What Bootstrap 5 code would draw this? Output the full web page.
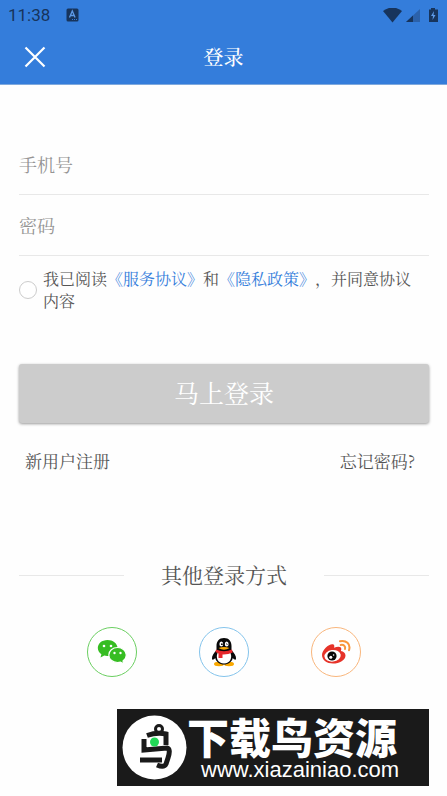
<!DOCTYPE html>
<html lang="zh-CN">
<head>
<meta charset="utf-8">
<meta name="viewport" content="width=device-width, initial-scale=1">
<title>登录</title>
<link href="https://cdn.jsdelivr.net/npm/bootstrap@5.3.0/dist/css/bootstrap.min.css" rel="stylesheet">
<style>
  body { background: #fefefe; color: #555; font-family: "Noto Serif CJK SC", "Noto Sans CJK SC", serif; text-spacing-trim: space-all; }
  .top-area { background: #347ddb; height: 85px; border-bottom: 1px solid #7fa9dd; }
  .status-line { height: 30px; padding: 0 8px; font: 17px/32px Roboto, sans-serif; color: #17345c; }
  .title-line { display: grid; grid-template-columns: 50px 1fr 50px; height: 54px; align-items: center; padding: 0 10px; }
  .title-line h1 { font-size: 20px; line-height: 28px; font-weight: 500; }
  .page-body { padding: 49px 18px 0 19px; }
  .line-input { height: 61px; padding: 0; font-size: 18px; border: 0; border-bottom: 1px solid #e8e8e8; border-radius: 0; background: transparent; }
  .line-input::placeholder { color: #949494; }
  .agree-row { gap: 6px; padding: 12px 14px 0 0; font-size: 16px; line-height: 22px; }
  .agree-row .form-check-input { width: 18px; height: 18px; border-color: #ccc; }
  .blue-link { color: #347ddb; }
  .login-btn { margin-top: 52px; height: 59px; padding: 0 0 4px; font-size: 25px; line-height: 36px; color: #fff; background: #ccc; border: 0; border-radius: 3px; box-shadow: 0 1px 3px rgba(0,0,0,.4); }
  .login-btn:hover { background: #c4c4c4; color: #fff; }
  .help-row { margin-top: 25px; padding: 0 14px 0 6px; font-size: 17px; line-height: 26px; }
  .help-row a { color: #555; }
  .other-title { margin-top: 83px; gap: 37px; }
  .other-title h2 { font-size: 21px; line-height: 34px; font-weight: 400; padding-bottom: 2px; }
  .rule-line { height: 1px; background: #e8e8e8; }
  .social-row { margin-top: 34px; gap: 62px; }
  .social-btn { width: 50px; height: 50px; background: #fff; border: 1px solid; border-radius: 50%; }
  .wechat { border-color: #6bcf61; } .qq { border-color: #84c4ec; } .weibo { border-color: #f9b67c; }
  .site-banner { width: 312px; height: 77px; margin-top: 32px; padding: 0 5px; background: #1a1a1a; color: #fff; }
  .site-name { font: 900 42px/44px "Noto Sans CJK SC", sans-serif; }
  .site-url { font: 22px/24px "Liberation Sans", Arial, sans-serif; padding-left: 14px; }
</style>
<script src="https://cdn.jsdelivr.net/npm/bootstrap@5.3.0/dist/js/bootstrap.bundle.min.js"></script>
</head>
<body>
<header class="top-area">
  <div class="status-line d-flex justify-content-between">
    <div class="d-flex align-items-center"><span>11:38</span>
      <svg class="ms-3" width="13" height="14" viewBox="0 0 13 14" aria-hidden="true"><rect x=".5" y=".5" width="12" height="13" rx="1.5" fill="#17345c"/><path d="M3.5 9.5 6.3 3l2.8 6.500M4.500 7.500h3.700" fill="none" stroke="#5d9ae8" stroke-width="1.300"/><path d="M6 11.500h5" stroke="#347ddb" stroke-dasharray="1 1"/></svg>
    </div>
    <svg width="57" height="18" viewBox="0 0 57 18" class="mt-2 align-self-start" aria-hidden="true"><g transform="translate(0 -1)">
      <path d="M1 4Q10.500-3 20 4L10.500 15.500Z" fill="#17345c"/><path d="M38 2V15H24Z" fill="#2b61aa"/><path d="M31 8.500V15H24Z" fill="#17345c"/>
      <path d="M49 1h4v1.500h3V15h-9V2.500h2Z" fill="#17345c"/><path d="m52 4-3 5h2l-.5 4 3-5h-2Z" fill="#5d9ae8"/></g></svg>
  </div>
  <div class="title-line text-white text-center">
    <button type="button" class="btn p-0 d-flex justify-content-center align-items-center border-0" aria-label="关闭"><svg width="22" height="22" viewBox="0 0 22 22"><path d="m1.500 1.500 19 19M20.500 1.500l-19 19" stroke="#fff" stroke-width="2.200"/></svg></button>
    <h1 class="m-0">登录</h1>
  </div>
</header>
<main class="page-body">
  <form>
    <input class="form-control line-input shadow-none" type="tel" aria-label="手机号" placeholder="手机号">
    <input class="form-control line-input shadow-none" type="password" aria-label="密码" placeholder="密码">
    <div class="agree-row d-flex align-items-center">
      <input class="form-check-input rounded-circle flex-shrink-0 m-0" type="checkbox" id="agree">
      <label for="agree">我已阅读<a class="blue-link text-decoration-none" href="#">《服务协议》</a>和<a class="blue-link text-decoration-none" href="#">《隐私政策》</a>，并同意协议内容</label>
    </div>
    <button type="button" class="btn login-btn w-100">马上登录</button>
  </form>
  <div class="help-row d-flex justify-content-between"><a class="text-decoration-none" href="#">新用户注册</a><a class="text-decoration-none" href="#">忘记密码?</a></div>
  <div class="other-title d-flex align-items-center"><div class="rule-line flex-grow-1"></div><h2 class="m-0">其他登录方式</h2><div class="rule-line flex-grow-1"></div></div>
  <div class="social-row d-flex justify-content-center">
    <button type="button" class="social-btn wechat p-0 d-flex justify-content-center align-items-center" aria-label="微信登录">
      <svg width="30" height="26" viewBox="0 0 30 26"><path d="M10.500 1C4.800 1 .8 4.600.8 9c0 2.600 1.400 4.800 3.600 6.300L3.500 18.500l3.800-2q1.600.5 3.400.4h10V9C20 4.200 16 1 10.500 1Z" fill="#36bd22"/><path d="M20.500 8.500c-5 0-8.700 3.300-8.700 7.500s3.700 7.500 8.700 7.500q1.500 0 3-.4l3.300 2-.8-3c2-1.400 3.300-3.500 3.300-6.100 0-4.200-3.800-7.500-8.800-7.500Z" fill="#36bd22" stroke="#fff" stroke-width="1.200"/><g fill="#fff"><circle cx="7" cy="7" r="1.300"/><circle cx="14" cy="7" r="1.300"/><circle cx="17.500" cy="14" r="1.200"/><circle cx="23.500" cy="14" r="1.200"/></g></svg>
    </button>
    <button type="button" class="social-btn qq p-0 d-flex justify-content-center align-items-center" aria-label="QQ登录">
      <svg width="26" height="30" viewBox="0 0 26 30"><ellipse cx="8" cy="27" rx="5" ry="2.200" fill="#f9a800"/><ellipse cx="18" cy="27" rx="5" ry="2.200" fill="#f9a800"/><path d="M13 1C8 1 5.500 4.500 5.500 9v4C3 16 .5 19 1 22c.3 1.500 2 .5 3.200-1 1 4 4.500 6.500 8.800 6.500s7.800-2.500 8.800-6.500c1.200 1.500 2.900 2.500 3.200 1 .5-3-2-6-4.500-9V9C20.500 4.500 18 1 13 1Z" fill="#080808"/><path d="M6.500 16h13c2 5-.5 10.500-6.500 10.500S4.500 21 6.500 16Z" fill="#fff"/><path d="M5 12.500q8 3.500 16 0l.7 3q-5 2.200-10.200 1.900V21H7.500v-4.500L4.500 15Z" fill="#e5262b"/><ellipse cx="10.300" cy="7" rx="1.900" ry="2.500" fill="#fff"/><ellipse cx="15.700" cy="7" rx="1.900" ry="2.500" fill="#fff"/><circle cx="10.900" cy="7.200" r=".9"/><path d="M15 7.500q.8-1.500 1.600 0" fill="none" stroke="#000" stroke-width=".8"/><path d="M7.500 11q5.500-2.200 11 0-5.500 3.300-11 0Z" fill="#f9a800"/></svg>
    </button>
    <button type="button" class="social-btn weibo p-0 d-flex justify-content-center align-items-center" aria-label="微博登录">
      <svg width="30" height="26" viewBox="0 0 30 26"><path d="M1 16C1 10.500 8.500 4.300 12 5.300c1.500.4 1.500 2 1 3.500 3.500-1.500 7.500-1.700 7.300 1.400l-.4 1.900c2.500.6 4.600 1.900 4.600 4.300 0 4.500-6 8.100-12.500 8.100C6 24.500 1 21 1 16Z" fill="#e63329"/><ellipse cx="11.600" cy="16.800" rx="8.200" ry="5.800" fill="#fff" transform="rotate(-7 11.600 16.800)"/><circle cx="11" cy="17" r="4.600" fill="#080808"/><circle cx="9.800" cy="18.200" r="1.500" fill="#fff"/><circle cx="12.600" cy="16" r=".8" fill="#fff"/><g fill="none" stroke="#f9963b" stroke-width="2" stroke-linecap="round"><path d="M19 2.200C25 .8 30 5 28 11.200"/><path d="M19.700 6c3-.7 5.200 1.300 4.300 4"/></g></svg>
    </button>
  </div>
  <div class="site-banner d-flex align-items-center ms-auto">
    <svg class="flex-shrink-0" width="65" height="65" viewBox="0 0 65 65" aria-hidden="true"><circle cx="32.500" cy="32.500" r="32" fill="#fff"/><g fill="none" stroke="#1a1a1a" stroke-width="5"><circle cx="37" cy="14" r="3.500" stroke-width="3"/><path d="M25 20.500Q35 17 44 19V30"/><path d="M22 24V35L45 33Q49 34 46 43L44 49Q42 53 35 50"/><path d="M18 45H40"/></g><circle cx="32.500" cy="27" r="4.500" fill="#21d957"/></svg>
    <div class="text-nowrap"><div class="site-name">下载鸟资源</div><div class="site-url">www.xiazainiao.com</div></div>
  </div>
</main>
</body>
</html>
